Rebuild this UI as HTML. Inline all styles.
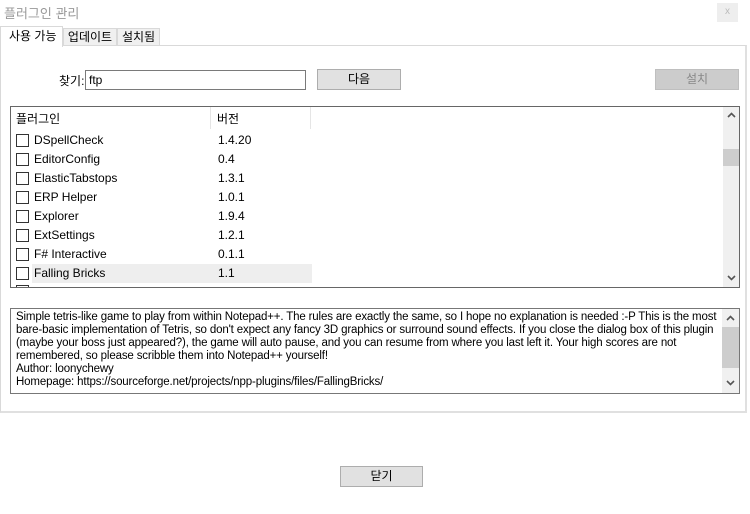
<!DOCTYPE html>
<html><head><meta charset="utf-8"><style>
*{box-sizing:border-box;margin:0;padding:0}
body{width:750px;height:514px;background:#fff;position:relative;overflow:hidden;font-family:"Liberation Sans","Noto Sans CJK KR",sans-serif;font-size:12px;color:#000}
.a{position:absolute}
.btn{position:absolute;background:#e1e1e1;border:1px solid #adadad;text-align:center;line-height:18px}
.row{position:absolute;left:1px;height:19px;line-height:19px;width:300px}
.cb{position:absolute;left:4px;top:3px;width:13px;height:13px;border:1px solid #333;background:#fff}
.nm{position:absolute;left:22px}
.vr{position:absolute;left:206px}
svg.ar{position:absolute;width:9px;height:6px}
</style></head><body>
<div class="a" style="left:4px;top:3px;color:#999;font-size:13px">플러그인 관리</div>
<div class="a" style="left:717px;top:3px;width:21px;height:19px;background:#eee;color:#bbb;text-align:center;line-height:18px;font-size:10px">x</div>
<div class="a" style="left:0;top:45px;width:747px;height:368px;border:1px solid #d9d9d9;border-right:2px solid #e0e0e0;border-bottom:2px solid #e0e0e0;background:#fff"></div>
<div class="a" style="left:0;top:26px;width:63px;height:21px;border:1px solid #d9d9d9;border-bottom:none;background:#fff;padding-left:8px;line-height:18px">사용 가능</div>
<div class="a" style="left:63px;top:28px;width:54px;height:18px;border:1px solid #d9d9d9;background:#f0f0f0;text-align:center;line-height:16px">업데이트</div>
<div class="a" style="left:117px;top:28px;width:43px;height:18px;border:1px solid #d9d9d9;background:#f0f0f0;text-align:center;line-height:16px">설치됨</div>
<div class="a" style="left:59px;top:72px">찾기:</div>
<div class="a" style="left:85px;top:70px;width:221px;height:20px;border:1px solid #7a7a7a;padding-left:3px;line-height:18px">ftp</div>
<div class="btn" style="left:317px;top:69px;width:84px;height:21px">다음</div>
<div class="btn" style="left:655px;top:69px;width:84px;height:21px;background:#ccc;border-color:#bfbfbf;color:#888">설치</div>
<div class="a" style="left:10px;top:106px;width:730px;height:182px;border:1px solid #666;background:#fff;overflow:hidden">
 <div class="a" style="left:0;top:0;width:300px;height:22px;border-right:1px solid #e5e5e5"></div>
 <div class="a" style="left:199px;top:0;height:22px;border-left:1px solid #e5e5e5"></div>
 <div class="a" style="left:5px;top:3px">플러그인</div>
 <div class="a" style="left:206px;top:3px">버전</div>
 <div class="row" style="top:24px"><div class="cb"></div><span class="nm">DSpellCheck</span><span class="vr">1.4.20</span></div>
 <div class="row" style="top:43px"><div class="cb"></div><span class="nm">EditorConfig</span><span class="vr">0.4</span></div>
 <div class="row" style="top:62px"><div class="cb"></div><span class="nm">ElasticTabstops</span><span class="vr">1.3.1</span></div>
 <div class="row" style="top:81px"><div class="cb"></div><span class="nm">ERP Helper</span><span class="vr">1.0.1</span></div>
 <div class="row" style="top:100px"><div class="cb"></div><span class="nm">Explorer</span><span class="vr">1.9.4</span></div>
 <div class="row" style="top:119px"><div class="cb"></div><span class="nm">ExtSettings</span><span class="vr">1.2.1</span></div>
 <div class="row" style="top:138px"><div class="cb"></div><span class="nm">F# Interactive</span><span class="vr">0.1.1</span></div>
 <div class="row" style="top:157px"><div class="a" style="left:20px;top:0;width:280px;height:19px;background:#eee"></div><div class="cb"></div><span class="nm">Falling Bricks</span><span class="vr">1.1</span></div>
 <div class="cb" style="left:5px;top:178px"></div>
 <div class="a" style="left:712px;top:0;width:16px;height:180px;background:#f0f0f0"></div>
 <div class="a" style="left:712px;top:42px;width:16px;height:17px;background:#cdcdcd"></div>
 <svg class="ar" style="left:716px;top:5px" viewBox="0 0 9 6"><path d="M1 5 L4.5 1.5 L8 5" fill="none" stroke="#555" stroke-width="1.6"/></svg>
 <svg class="ar" style="left:716px;top:168px" viewBox="0 0 9 6"><path d="M1 1 L4.5 4.5 L8 1" fill="none" stroke="#555" stroke-width="1.6"/></svg>
</div>
<div class="a" style="left:10px;top:308px;width:730px;height:86px;border:1px solid #777;background:#fff;padding:2px 22px 0 5px;font-size:11.5px;line-height:13px;letter-spacing:-0.15px">
Simple tetris-like game to play from within Notepad++. The rules are exactly the same, so I hope no explanation is needed :-P This is the most bare-basic implementation of Tetris, so don't expect any fancy 3D graphics or surround sound effects. If you close the dialog box of this plugin (maybe your boss just appeared?), the game will auto pause, and you can resume from where you last left it. Your high scores are not remembered, so please scribble them into Notepad++ yourself!<br>Author: loonychewy<br>Homepage: https://sourceforge.net/projects/npp-plugins/files/FallingBricks/
 <div class="a" style="left:711px;top:0;width:17px;height:84px;background:#f0f0f0"></div>
 <div class="a" style="left:711px;top:18px;width:17px;height:41px;background:#cdcdcd"></div>
 <svg class="ar" style="left:715px;top:6px" viewBox="0 0 9 6"><path d="M1 5 L4.5 1.5 L8 5" fill="none" stroke="#555" stroke-width="1.6"/></svg>
 <svg class="ar" style="left:715px;top:71px" viewBox="0 0 9 6"><path d="M1 1 L4.5 4.5 L8 1" fill="none" stroke="#555" stroke-width="1.6"/></svg>
</div>
<div class="btn" style="left:340px;top:466px;width:83px;height:21px">닫기</div>
</body></html>
